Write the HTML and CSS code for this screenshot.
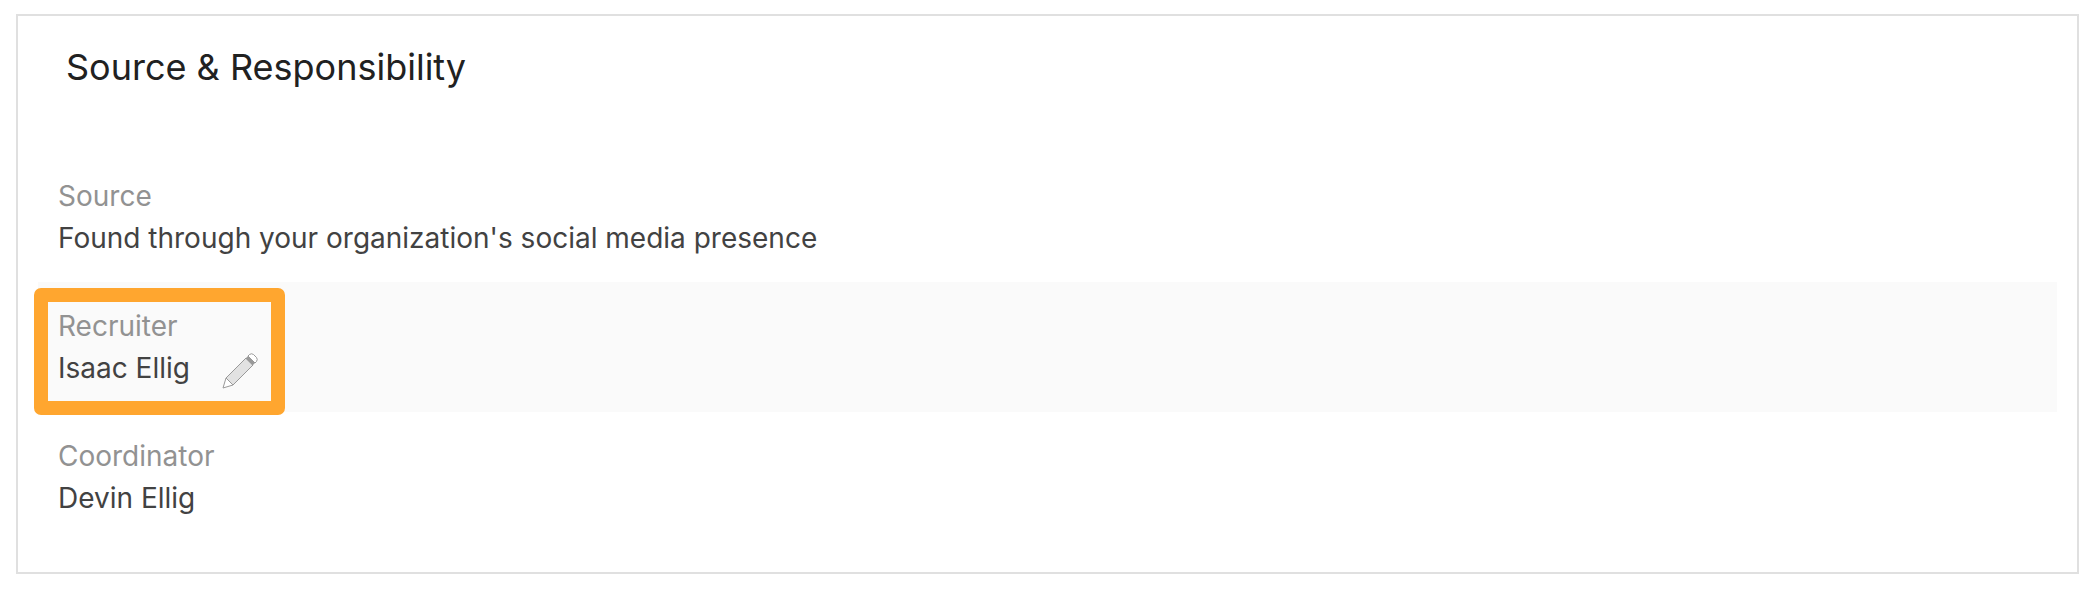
FILE: index.html
```html
<!DOCTYPE html>
<html lang="en">
<head>
<meta charset="utf-8">
<meta name="viewport" content="width=device-width, initial-scale=1">
<title>Source &amp; Responsibility</title>
<link rel="stylesheet" href="styles.css">
</head>
<body>
<section class="card">
  <h2 class="card-title">Source &amp; Responsibility</h2>
  <dl class="fields">
    <div class="field">
      <dt class="label">Source</dt>
      <dd class="value">Found through your organization's social media presence</dd>
    </div>
    <div class="field field-active">
      <dt class="label">Recruiter</dt>
      <dd class="value">Isaac Ellig
        <button class="edit" type="button" aria-label="Edit recruiter">
          <svg class="edit-icon" viewBox="0 0 36 36" aria-hidden="true">
            <path d="M4 25 24 5 31 12 11 32Z" fill="#e2e2e2"/>
            <path d="M23.500 5.500 27 2 34 9 30.500 12.500Z" fill="#999"/>
            <path d="M26 3 27.500 1.500Q29.500 0 31.500 1.500L34.500 4.500Q36 6.500 34.500 8.500L33 10Z" fill="#fff" stroke="#999"/>
            <path d="M4 25 24 5M11 32 31 12" fill="none" stroke="#999"/>
            <path d="M4 25 1 35 11 32Z" fill="#fff" stroke="#999" stroke-linejoin="round"/>
          </svg>
        </button>
      </dd>
      <dd class="highlight" aria-hidden="true"></dd>
    </div>
    <div class="field">
      <dt class="label">Coordinator</dt>
      <dd class="value">Devin Ellig</dd>
    </div>
  </dl>
</section>
</body>
</html>
```
FILE: styles.css
```css
* {
  box-sizing: border-box;
}

body {
  margin: 0;
  padding: 14px 15px 18px 16px;
  background: #fff;
  color: #424242;
  font-family: Inter, "Liberation Sans", sans-serif;
  font-size: 28px;
  line-height: 42px;
}

.card {
  padding: 27px 20px 30px;
  border: 2px solid #e0e0e0;
}

.card-title {
  margin: 0 0 61px;
  padding-left: 28px;
  color: #212121;
  font-size: 36px;
  font-weight: 400;
  line-height: 48px;
}

.fields {
  margin: 0;
}

.field {
  position: relative;
  padding: 23px 20px;
}

.field-active {
  background: #fafafa;
}

.label {
  color: #929292;
}

.value {
  display: flex;
  align-items: center;
  gap: 32px;
  margin: 0;
}

.edit {
  display: flex;
  height: 42px;
  padding: 6px 0 0;
  border: 0;
  background: none;
  cursor: pointer;
}

.edit-icon {
  width: 36px;
  height: 36px;
}

.highlight {
  position: absolute;
  top: 6px;
  left: -4px;
  width: 251px;
  height: 127px;
  margin: 0;
  border: 14px solid #ffa62f;
  border-radius: 7px;
  pointer-events: none;
}
```
